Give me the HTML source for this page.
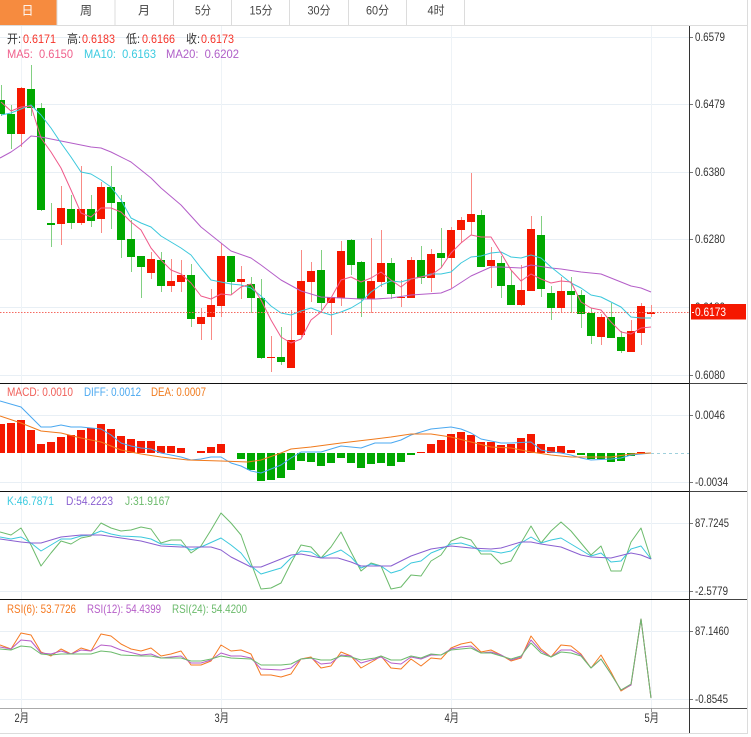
<!DOCTYPE html>
<html lang="zh">
<head>
<meta charset="utf-8">
<title>K线图</title>
<style>
html,body{margin:0;padding:0;background:#fff;width:751px;height:737px;overflow:hidden}
svg{display:block;position:absolute;left:0;top:0}
text{font-family:"Liberation Sans","Noto Sans CJK SC",sans-serif;font-size:12px}
.tab{font-size:12px;fill:#444;text-anchor:middle}
.ax{fill:#333}
.l{fill:none;stroke-width:1;stroke-linejoin:round}
</style>
</head>
<body>
<svg width="751" height="737" viewBox="0 0 751 737" xmlns="http://www.w3.org/2000/svg">
<rect width="751" height="737" fill="#fff"/>

<!-- tabs -->
<rect x="0" y="0" width="56.5" height="25" fill="#f68b3f"/>
<path d="M0 25.5H748M57 0V25M115 0V25M173.5 0V25M231.5 0V25M289.5 0V25M348.5 0V25M406.5 0V25M464.5 0V25M747.5 0V733.5M0 733.5H748" stroke="#dcdcdc" stroke-width="1" fill="none"/>
<text class="tab" x="27.5" y="14.5" style="fill:#fff">日</text>
<text class="tab" x="86" y="14.5">周</text>
<text class="tab" x="144" y="14.5">月</text>
<text class="tab" x="203" y="14.5" textLength="16" lengthAdjust="spacingAndGlyphs">5分</text>
<text class="tab" x="261" y="14.5" textLength="23" lengthAdjust="spacingAndGlyphs">15分</text>
<text class="tab" x="319" y="14.5" textLength="23" lengthAdjust="spacingAndGlyphs">30分</text>
<text class="tab" x="377.5" y="14.5" textLength="23" lengthAdjust="spacingAndGlyphs">60分</text>
<text class="tab" x="436" y="14.5" textLength="17" lengthAdjust="spacingAndGlyphs">4时</text>

<!-- grid -->
<path d="M0 37.5H689M0 104.5H689M0 172.5H689M0 239.5H689M0 307.5H689M0 375.5H689M0 415.5H689M0 482.5H689M0 523.5H689M0 591.5H689M0 631.5H689M0 699.5H689" stroke="#e8eff5" stroke-width="1" fill="none"/>
<path d="M21.5 26V708M221.5 26V708M451.5 26V708M651.5 26V708" stroke="#eef3f7" stroke-width="1" fill="none"/>

<!-- wicks -->
<path fill="none" stroke="#82d082" stroke-width="1" d="M1.5 85V116M11.5 105V149M31.5 65V116M41.5 103V211M51.5 203V247M71.5 195V229M91.5 195V227M111.5 166V229M121.5 195V258M131.5 220V272M141.5 256V298M161.5 252V292M191.5 264V327M231.5 256V295M251.5 277V313M261.5 279V359M281.5 327V365M321.5 250V310M351.5 239V275M361.5 261V317M391.5 258V299M421.5 246V284M441.5 228V268M481.5 210V267M501.5 256V298M511.5 271V305M541.5 216V297M551.5 286V320M571.5 277V313M581.5 290V328M591.5 308V344M611.5 303V338M621.5 331V353"/>
<path fill="none" stroke="#f98b85" stroke-width="1" d="M21.5 87V147M61.5 186V245M81.5 166V225M101.5 182V233M151.5 252V279M171.5 259V292M181.5 260V292M201.5 308V340M211.5 289V340M221.5 243V317M241.5 266V299M271.5 336V372M291.5 310V368M301.5 250V337M311.5 262V302M331.5 297V335M341.5 241V306M371.5 238V313M381.5 230V287M401.5 280V307M411.5 257V298M431.5 249V292M451.5 227V288M461.5 217V243M471.5 173V235M491.5 247V288M521.5 265V306M531.5 216V291M561.5 277V312M601.5 314V345M631.5 320V352M641.5 303V345M651.5 305V317"/>

<!-- bodies -->
<path fill="#00a800" d="M-3 100h8v14h-8zM7 114h8v20h-8zM27 89h8v19h-8zM37 108h8v102h-8zM47 223h8v2h-8zM67 209h8v14h-8zM87 209h8v12h-8zM107 187h8v16h-8zM117 202h8v38h-8zM127 239h8v18h-8zM137 256h8v11h-8zM157 260h8v26h-8zM187 275h8v44h-8zM227 256h8v26h-8zM247 284h8v14h-8zM257 298h8v60h-8zM277 357h8v5h-8zM317 270h8v33h-8zM347 240h8v25h-8zM357 262h8v37h-8zM387 263h8v31h-8zM417 260h8v18h-8zM437 253h8v5h-8zM477 215h8v52h-8zM497 263h8v23h-8zM507 285h8v20h-8zM537 235h8v54h-8zM547 293h8v15h-8zM567 291h8v4h-8zM577 295h8v19h-8zM587 313h8v23h-8zM607 317h8v21h-8zM617 337h8v14h-8z"/>
<path fill="#f51800" d="M17 88h8v46h-8zM57 208h8v16h-8zM77 209h8v14h-8zM97 187h8v32h-8zM147 259h8v14h-8zM167 281h8v5h-8zM177 275h8v7h-8zM197 317h8v7h-8zM207 305h8v12h-8zM217 256h8v50h-8zM237 279h8v3h-8zM267 357h8v1h-8zM287 340h8v28h-8zM297 281h8v54h-8zM307 271h8v11h-8zM327 297h8v6h-8zM337 251h8v47h-8zM367 281h8v18h-8zM377 263h8v19h-8zM397 297h8v1h-8zM407 260h8v38h-8zM427 254h8v24h-8zM447 230h8v28h-8zM457 220h8v10h-8zM467 214h8v8h-8zM487 260h8v6h-8zM517 290h8v15h-8zM527 229h8v62h-8zM557 291h8v17h-8zM597 317h8v20h-8zM627 331h8v21h-8zM637 306h8v27h-8zM647 312h8v2h-8z"/>

<!-- MA lines -->
<polyline class="l" stroke="#b45ec8" points="0,158 11,152 21,145 31,136 41,137 61,141 71,143 91,147 101,148 111,152 131,162 151,178 161,188 181,205 201,227 221,243 231,251 251,258 261,265 281,280 301,291 321,297 341,298 361,299 375,299 391,298 411,295 441,293 451,289 471,276 491,267 501,267 521,268 531,265 551,268 561,269 581,272 601,274 621,282 631,286 641,288 651,292"/>
<polyline class="l" stroke="#3bc8dc" points="1,115 11,113 21,109 31,105 41,115 51,128 61,143 71,157 81,172 91,174 101,180 111,187 121,200 131,218 141,223 151,227 161,236 171,242 181,248 191,255 201,268 211,280 221,282 231,284 241,285 251,288 261,296 271,306 281,313 291,315 301,311 311,308 321,312 331,315 341,312 351,308 361,302 371,292 381,285 391,281 401,282 411,279 421,277 431,274 441,274 451,272 461,263 471,257 481,256 491,253 501,252 511,257 521,258 531,255 541,258 551,267 561,275 571,283 581,288 591,295 601,297 611,302 621,307 631,317 641,318 651,318"/>
<polyline class="l" stroke="#ef5a8a" points="1,102 11,111 21,107 31,106 41,138 51,152 61,168 71,190 81,213 91,217 101,208 111,208 121,212 131,222 141,230 151,248 161,260 171,270 181,274 191,283 201,296 211,299 221,294 231,295 241,287 251,284 261,300 271,320 281,337 291,343 301,339 311,320 321,312 331,298 341,280 351,277 361,282 371,278 381,272 391,280 401,287 411,279 421,277 431,275 441,268 451,253 461,243 471,235 481,237 491,237 501,253 511,270 521,281 531,274 541,279 551,283 561,281 571,282 581,302 591,308 601,310 611,322 621,332 631,334 641,328 651,327"/>

<!-- current price -->
<path d="M0 312.5H690" stroke="#f56a60" stroke-width="1" stroke-dasharray="1.5 1.5" fill="none"/>

<!-- MACD bars -->
<path fill="#f51800" d="M-3 424h8v29h-8zM7 423h8v30h-8zM17 420h8v33h-8zM27 430h8v23h-8zM37 444h8v9h-8zM47 442h8v11h-8zM57 437h8v16h-8zM67 435h8v18h-8zM77 430h8v23h-8zM87 428h8v25h-8zM97 424h8v29h-8zM107 429h8v24h-8zM117 436h8v17h-8zM127 439h8v14h-8zM137 441h8v12h-8zM147 441h8v12h-8zM157 446h8v7h-8zM167 446h8v7h-8zM177 448h8v5h-8zM197 451h8v2h-8zM207 447h8v6h-8zM217 444h8v9h-8zM417 452h8v1h-8zM427 444h8v9h-8zM437 440h8v13h-8zM447 434h8v19h-8zM457 432h8v21h-8zM467 435h8v18h-8zM477 442h8v11h-8zM487 442h8v11h-8zM497 445h8v8h-8zM507 444h8v9h-8zM517 438h8v15h-8zM527 434h8v19h-8zM537 444h8v9h-8zM547 447h8v6h-8zM557 446h8v7h-8zM567 450h8v3h-8zM637 452h8v1h-8z"/>
<path fill="#00a800" d="M237 453h8v6h-8zM247 453h8v17h-8zM257 453h8v28h-8zM267 453h8v27h-8zM277 453h8v25h-8zM287 453h8v17h-8zM297 453h8v8h-8zM307 453h8v9h-8zM317 453h8v13h-8zM327 453h8v10h-8zM337 453h8v5h-8zM347 453h8v10h-8zM357 453h8v15h-8zM367 453h8v11h-8zM377 453h8v10h-8zM387 453h8v13h-8zM397 453h8v9h-8zM407 453h8v2h-8zM577 453h8v2h-8zM587 453h8v6h-8zM597 453h8v6h-8zM607 453h8v9h-8zM617 453h8v8h-8zM627 453h8v3h-8z"/>
<path d="M651 453.5H689" stroke="#9fd0dc" stroke-width="1" stroke-dasharray="3 3" fill="none"/>
<polyline class="l" stroke="#4aa8f0" points="0,401 21,407 41,427 51,427 61,425 71,427 81,427 91,428 101,429 111,435 121,443 131,446 141,448 151,449 161,453 171,455 181,457 191,460 201,459 211,457 221,457 231,463 241,466 251,471 261,473 271,469 281,465 291,458 301,452 321,452 341,446 361,448 375,443 391,443 401,440 411,435 421,432 431,429 451,427 461,429 471,433 481,439 501,443 511,443 531,442 541,450 551,452 561,453 571,455 581,458 591,460 611,459 621,458 631,455 651,453"/>
<polyline class="l" stroke="#f07a1c" points="0,416 21,423 41,431 61,433 81,438 101,442 121,450 141,454 161,457 188,460 221,461 248,462 261,460 281,453 291,449 311,447 341,443 375,439 391,437 411,434 431,434 451,437 471,442 491,447 511,448 531,452 551,455 571,457 591,457 611,457 631,454 651,453"/>

<!-- KDJ -->
<polyline class="l" stroke="#6cbb6c" points="0,532 11,535 21,528 31,545 41,566 51,553 61,541 71,544 81,538 91,536 101,523 111,528 121,531 131,530 141,527 151,529 161,543 171,540 181,540 191,553 201,546 211,530 221,513 231,523 241,535 251,563 261,589 271,588 281,583 291,563 301,545 311,547 321,558 331,547 341,532 351,552 361,571 371,563 381,566 391,589 401,587 411,575 421,576 431,561 441,555 451,541 461,537 471,540 481,554 491,554 501,564 511,561 521,543 531,526 541,543 551,531 561,522 571,531 581,543 591,555 601,546 611,571 621,571 631,542 641,528 651,559"/>
<polyline class="l" stroke="#3bc8dc" points="0,537 11,539 21,537 31,543 41,551 51,545 61,539 71,539 81,536 91,535 101,531 111,534 121,536 141,537 151,539 161,544 181,545 191,550 201,547 221,538 231,545 241,553 251,566 261,574 281,568 291,558 301,551 311,552 321,558 341,550 351,557 361,568 371,564 381,566 391,573 401,570 411,563 421,561 431,553 441,549 451,544 461,543 471,546 481,551 491,551 501,553 511,551 521,543 531,537 541,543 551,540 561,538 571,544 591,556 601,553 611,562 621,561 631,549 641,546 651,559"/>
<polyline class="l" stroke="#8a5fd0" points="0,539 21,542 31,543 41,543 51,540 61,537 81,535 101,535 121,538 141,541 161,546 181,547 211,547 221,550 231,557 251,567 261,567 281,559 291,555 301,554 321,558 338,558 351,562 361,566 375,566 391,566 411,556 431,549 451,546 471,548 491,549 501,548 521,542 531,542 541,544 561,547 581,555 591,557 611,558 631,553 641,555 651,559"/>

<!-- RSI -->
<polyline class="l" stroke="#f57a22" points="0,645 11,649 21,633 31,635 41,652 51,656 61,649 71,654 81,648 91,651 101,634 111,636 121,644 131,649 141,651 151,648 161,656 171,654 181,651 191,665 201,665 211,661 221,645 231,651 241,650 251,654 261,675 271,675 281,677 291,674 301,659 311,657 321,668 331,666 341,652 351,656 361,668 375,660 381,656 391,668 401,669 411,659 421,666 431,658 441,659 451,648 461,644 471,642 481,652 491,650 501,655 511,661 521,658 531,636 541,649 551,657 561,645 571,646 581,654 591,668 601,655 611,672 621,691 631,685 641,619 651,698"/>
<polyline class="l" stroke="#b65ec8" points="0,647 11,649 21,640 31,641 41,653 51,654 61,651 71,654 81,650 91,651 101,645 111,646 121,650 141,655 151,654 161,658 181,656 191,663 201,663 211,660 221,653 231,656 241,656 251,658 261,669 281,670 291,668 301,659 311,658 321,664 331,663 341,655 351,656 361,663 375,659 381,657 391,663 401,664 411,657 421,659 431,655 441,655 451,649 461,647 471,646 481,653 491,652 501,655 511,660 521,657 531,640 541,651 551,657 561,650 571,650 581,655 591,668 601,659 611,674 621,690 631,685 641,619 651,698"/>
<polyline class="l" stroke="#6cbb6c" points="0,649 11,650 21,646 31,647 41,654 51,655 61,654 71,654 81,654 91,654 101,651 111,652 121,655 141,656 151,656 161,658 181,658 191,661 201,661 211,659 221,656 231,658 251,659 261,665 281,665 291,664 301,659 311,658 321,660 331,660 341,656 351,657 361,660 375,658 381,656 391,660 401,660 411,656 421,658 431,654 441,655 451,650 471,648 481,653 491,653 501,656 511,659 521,656 531,643 541,653 551,657 561,652 571,653 581,656 591,668 601,659 611,674 621,690 631,684 641,619 651,698"/>

<!-- separators / axes -->
<path d="M0 383.5H689M0 491.5H689M0 599.5H689" stroke="#111" stroke-width="1" fill="none"/>
<path d="M690 383.5H747M690 491.5H747M690 599.5H747M690 708.5H747" stroke="#444" stroke-width="1" fill="none"/>
<path d="M0 708.5H689" stroke="#aaa" stroke-width="1" fill="none"/>
<path d="M689.5 26V733" stroke="#333" stroke-width="1" fill="none"/>
<path d="M690 37.5H693M690 104.5H693M690 172.5H693M690 239.5H693M690 375.5H693M690 415.5H693M690 482.5H693M690 523.5H693M690 591.5H693M690 631.5H693M690 699.5H693" stroke="#777" stroke-width="1" fill="none"/>
<path d="M21.5 708V712M221.5 708V712M451.5 708V712M651.5 708V712" stroke="#999" stroke-width="1" fill="none"/>

<!-- axis labels -->
<text class="ax" x="695" y="41" textLength="30" lengthAdjust="spacingAndGlyphs">0.6579</text>
<text class="ax" x="695" y="108" textLength="30" lengthAdjust="spacingAndGlyphs">0.6479</text>
<text class="ax" x="695" y="176" textLength="30" lengthAdjust="spacingAndGlyphs">0.6380</text>
<text class="ax" x="695" y="243" textLength="30" lengthAdjust="spacingAndGlyphs">0.6280</text>
<text class="ax" x="695" y="311" textLength="30" lengthAdjust="spacingAndGlyphs">0.6180</text>
<rect x="691" y="304" width="55" height="15.5" fill="#f51800"/>
<rect x="692" y="312" width="2" height="1" fill="#fff"/>
<text x="695" y="316" textLength="31" lengthAdjust="spacingAndGlyphs" fill="#fff">0.6173</text>
<text class="ax" x="695" y="379" textLength="30" lengthAdjust="spacingAndGlyphs">0.6080</text>
<text class="ax" x="695" y="419" textLength="30" lengthAdjust="spacingAndGlyphs">0.0046</text>
<text class="ax" x="695" y="486" textLength="33" lengthAdjust="spacingAndGlyphs">-0.0034</text>
<text class="ax" x="695" y="527" textLength="34" lengthAdjust="spacingAndGlyphs">87.7245</text>
<text class="ax" x="695" y="595" textLength="33" lengthAdjust="spacingAndGlyphs">-2.5779</text>
<text class="ax" x="695" y="635" textLength="34" lengthAdjust="spacingAndGlyphs">87.1460</text>
<text class="ax" x="695" y="703" textLength="33" lengthAdjust="spacingAndGlyphs">-0.8545</text>

<text class="ax" x="14.5" y="722" textLength="14.5" lengthAdjust="spacingAndGlyphs">2月</text>
<text class="ax" x="214.5" y="722" textLength="14.5" lengthAdjust="spacingAndGlyphs">3月</text>
<text class="ax" x="444.5" y="722" textLength="14.5" lengthAdjust="spacingAndGlyphs">4月</text>
<text class="ax" x="644.5" y="722" textLength="14.5" lengthAdjust="spacingAndGlyphs">5月</text>

<!-- legends -->
<g fill="#333">
<text x="7" y="43" textLength="14" lengthAdjust="spacingAndGlyphs">开:</text><text x="67" y="43" textLength="14" lengthAdjust="spacingAndGlyphs">高:</text><text x="126" y="43" textLength="14" lengthAdjust="spacingAndGlyphs">低:</text><text x="186" y="43" textLength="14" lengthAdjust="spacingAndGlyphs">收:</text>
</g>
<g fill="#f5342a">
<text x="23" y="43" textLength="33" lengthAdjust="spacingAndGlyphs">0.6171</text>
<text x="82" y="43" textLength="33" lengthAdjust="spacingAndGlyphs">0.6183</text>
<text x="142" y="43" textLength="33" lengthAdjust="spacingAndGlyphs">0.6166</text>
<text x="201" y="43" textLength="33" lengthAdjust="spacingAndGlyphs">0.6173</text>
</g>
<text x="7" y="58" fill="#f0608c" textLength="66" lengthAdjust="spacingAndGlyphs">MA5:&#160;&#160;0.6150</text>
<text x="84" y="58" fill="#3ccbe0" textLength="72" lengthAdjust="spacingAndGlyphs">MA10:&#160;&#160;0.6163</text>
<text x="166" y="58" fill="#b060c8" textLength="73" lengthAdjust="spacingAndGlyphs">MA20:&#160;&#160;0.6202</text>

<text x="7" y="396" fill="#f0605a" textLength="66" lengthAdjust="spacingAndGlyphs">MACD: 0.0010</text>
<text x="84" y="396" fill="#4aa8f0" textLength="57" lengthAdjust="spacingAndGlyphs">DIFF: 0.0012</text>
<text x="151" y="396" fill="#f07a1c" textLength="55" lengthAdjust="spacingAndGlyphs">DEA: 0.0007</text>

<text x="7" y="505" fill="#3ccbe0" textLength="47" lengthAdjust="spacingAndGlyphs">K:46.7871</text>
<text x="66" y="505" fill="#8a5fd0" textLength="47" lengthAdjust="spacingAndGlyphs">D:54.2223</text>
<text x="125" y="505" fill="#6cbb6c" textLength="45" lengthAdjust="spacingAndGlyphs">J:31.9167</text>

<text x="7" y="613" fill="#f57a22" textLength="69" lengthAdjust="spacingAndGlyphs">RSI(6): 53.7726</text>
<text x="87" y="613" fill="#b65ec8" textLength="74" lengthAdjust="spacingAndGlyphs">RSI(12): 54.4399</text>
<text x="172" y="613" fill="#6cbb6c" textLength="75" lengthAdjust="spacingAndGlyphs">RSI(24): 54.4200</text>
</svg>
</body>
</html>
